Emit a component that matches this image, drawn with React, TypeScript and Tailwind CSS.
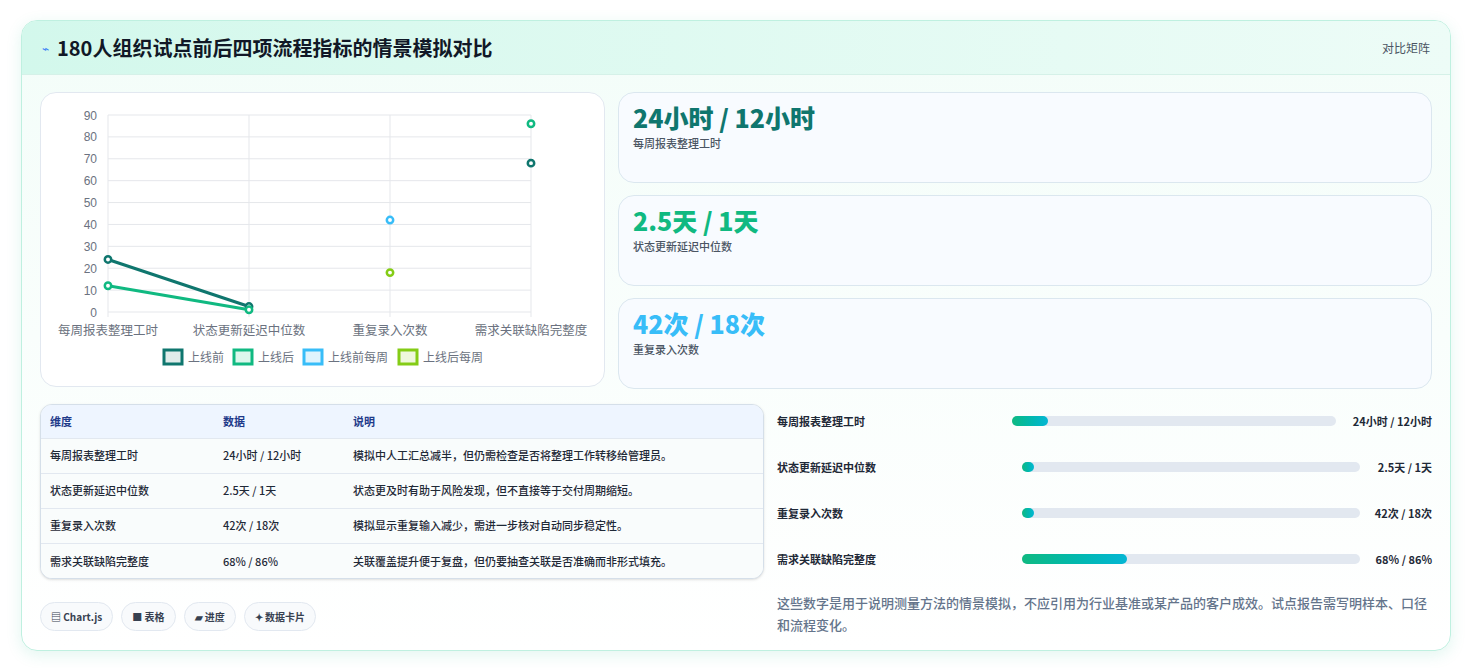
import React from "react";

const cats = ["每周报表整理工时", "状态更新延迟中位数", "重复录入次数", "需求关联缺陷完整度"];
const xs = [107, 248, 389, 530];
const y = (v: number) => 312 - (v / 90) * 197;

function Chart() {
  const grid = [0, 10, 20, 30, 40, 50, 60, 70, 80, 90];
  const dot = (x: number, v: number, c: string) => (
    <circle cx={x} cy={y(v)} r={3.2} fill="white" stroke={c} strokeWidth={2.5} />
  );
  return (
    <svg width="564" height="294" viewBox="40 93 564 294" className="block">
      {grid.map((g) => (
        <g key={g}>
          <line x1={107} x2={530} y1={y(g)} y2={y(g)} stroke="#e5e7eb" />
          <text x={96} y={y(g) + 4.5} fontSize="12" fill="#6b7280" textAnchor="end" fontFamily="Liberation Sans, sans-serif">{g}</text>
        </g>
      ))}
      {xs.map((x) => (
        <line key={x} x1={x} x2={x} y1={115} y2={317} stroke="#e5e7eb" />
      ))}
      {cats.map((c, i) => (
        <text key={c} x={xs[i]} y={335} fontSize="12.5" fill="#6b7280" textAnchor="middle" fontFamily="Noto Sans CJK SC, sans-serif">{c}</text>
      ))}
      <line x1={107} y1={y(24)} x2={248} y2={y(2.5)} stroke="#0f766e" strokeWidth={3} />
      <line x1={107} y1={y(12)} x2={248} y2={y(1)} stroke="#10b981" strokeWidth={3} />
      {dot(107, 24, "#0f766e")}
      {dot(248, 2.5, "#0f766e")}
      {dot(107, 12, "#10b981")}
      {dot(248, 1, "#10b981")}
      {dot(389, 42, "#38bdf8")}
      {dot(389, 18, "#84cc16")}
      {dot(530, 68, "#0f766e")}
      {dot(530, 86, "#10b981")}
      {[
        [163, "上线前", "#0f766e", "#e0ecea"],
        [233, "上线后", "#10b981", "#dcf7ec"],
        [303, "上线前每周", "#38bdf8", "#e0f4fd"],
        [398, "上线后每周", "#84cc16", "#eef8dc"],
      ].map(([x, t, c, f]) => (
        <g key={t as string}>
          <rect x={x as number} y={350} width={18} height={14} fill={f as string} stroke={c as string} strokeWidth={3} />
          <text x={(x as number) + 24} y={362} fontSize="12" fill="#6b7280" fontFamily="Noto Sans CJK SC, sans-serif">{t}</text>
        </g>
      ))}
    </svg>
  );
}

const rows = [
  ["每周报表整理工时", "24小时 / 12小时", "模拟中人工汇总减半，但仍需检查是否将整理工作转移给管理员。"],
  ["状态更新延迟中位数", "2.5天 / 1天", "状态更及时有助于风险发现，但不直接等于交付周期缩短。"],
  ["重复录入次数", "42次 / 18次", "模拟显示重复输入减少，需进一步核对自动同步稳定性。"],
  ["需求关联缺陷完整度", "68% / 86%", "关联覆盖提升便于复盘，但仍要抽查关联是否准确而非形式填充。"],
];

const bars = [
  ["每周报表整理工时", "24小时 / 12小时", 11],
  ["状态更新延迟中位数", "2.5天 / 1天", 3.5],
  ["重复录入次数", "42次 / 18次", 3.5],
  ["需求关联缺陷完整度", "68% / 86%", 31],
] as const;

const cards = [
  ["24小时 / 12小时", "每周报表整理工时", "text-[#0f766e]"],
  ["2.5天 / 1天", "状态更新延迟中位数", "text-[#10b981]"],
  ["42次 / 18次", "重复录入次数", "text-[#38bdf8]"],
];

export default function App() {
  return (
    <div className="min-h-screen bg-white p-5 text-[#1f2937]" style={{ fontFamily: '"Noto Sans CJK SC", "Noto Sans", sans-serif' }}>
      <div className="w-[1430px] ml-[1px] rounded-2xl border border-[#bff0e0] bg-gradient-to-b from-[#f3fdf9] to-white shadow-[0_4px_16px_rgba(16,185,129,0.12)] overflow-hidden">
        <div className="h-[54px] flex items-center justify-between px-5 bg-gradient-to-r from-[#d3f8ec] to-[#edfcf7] border-b border-[#d5f1e8]">
          <div className="flex items-center gap-2">
            <span className="text-[#3b82f6] text-xs">⌁</span>
            <h1 className="text-[20px] font-bold text-[#111827]">180人组织试点前后四项流程指标的情景模拟对比</h1>
          </div>
          <span className="text-xs text-[#4b5563]">对比矩阵</span>
        </div>
        <div className="px-[18px] pt-[17px] pb-[14px]">
          <div className="flex gap-[13px]">
            <div className="w-[565px] h-[295px] rounded-2xl border border-[#e2e8f0] bg-white overflow-hidden">
              <Chart />
            </div>
            <div className="flex-1 flex flex-col gap-3">
              {cards.map(([v, l, c]) => (
                <div key={l} className="h-[91px] rounded-2xl border border-[#dbe7ef] bg-[#f8fbff] px-[14px] pt-[9px]">
                  <div className={`text-[25px] font-extrabold leading-tight ${c}`}>{v}</div>
                  <div className="text-[11px] font-medium text-[#4b5563] mt-[2px]">{l}</div>
                </div>
              ))}
            </div>
          </div>
          <div className="flex gap-[13px] mt-[15px]">
            <div className="w-[724px]">
              <div className="rounded-xl border border-[#d5dfe9] overflow-hidden shadow-sm bg-white">
                <table className="w-full text-[11px] font-medium text-left">
                  <thead className="bg-[#eef5ff] text-[#1e3a8a]">
                    <tr className="h-[33px]">
                      <th className="pl-[9px] font-semibold w-[182px]">维度</th>
                      <th className="font-semibold w-[130px]">数据</th>
                      <th className="font-semibold">说明</th>
                    </tr>
                  </thead>
                  <tbody>
                    {rows.map((r) => (
                      <tr key={r[0]} className="h-[35px] border-t border-[#e2e8f0] bg-[#f9fcfc] text-[#1f2937]">
                        <td className="pl-[9px]">{r[0]}</td>
                        <td>{r[1]}</td>
                        <td>{r[2]}</td>
                      </tr>
                    ))}
                  </tbody>
                </table>
              </div>
              <div className="flex gap-2 mt-[23px] text-[10px] font-semibold text-[#374151]">
                {["▤ Chart.js", "■ 表格", "▰ 进度", "✦ 数据卡片"].map((t) => (
                  <span key={t} className="h-[29px] flex items-center px-[10px] rounded-full border border-[#e2e8f0] bg-[#f8fafc]">{t}</span>
                ))}
              </div>
            </div>
            <div className="flex-1 -mt-[6px]">
              {bars.map(([l, v, p], i) => (
                <div key={l} className="h-[46px] flex items-center text-[11px] font-semibold">
                  <span className="w-[235px]">{l}</span>
                  <div className={`flex-1 h-[10px] rounded-full bg-[#e2e8f0] ${i === 0 ? "" : "ml-[10px]"}`}>
                    <div className="h-full rounded-full bg-gradient-to-r from-[#10b981] to-[#06b6d4]" style={{ width: `${p}%` }} />
                  </div>
                  <span className={`${i === 0 ? "w-[96px]" : "w-[72px]"} text-right`}>{v}</span>
                </div>
              ))}
              <p className="mt-[10px] text-[13px] font-medium leading-[22px] text-[#64748b] pr-[4px]">
                这些数字是用于说明测量方法的情景模拟，不应引用为行业基准或某产品的客户成效。试点报告需写明样本、口径和流程变化。
              </p>
            </div>
          </div>
        </div>
      </div>
    </div>
  );
}
